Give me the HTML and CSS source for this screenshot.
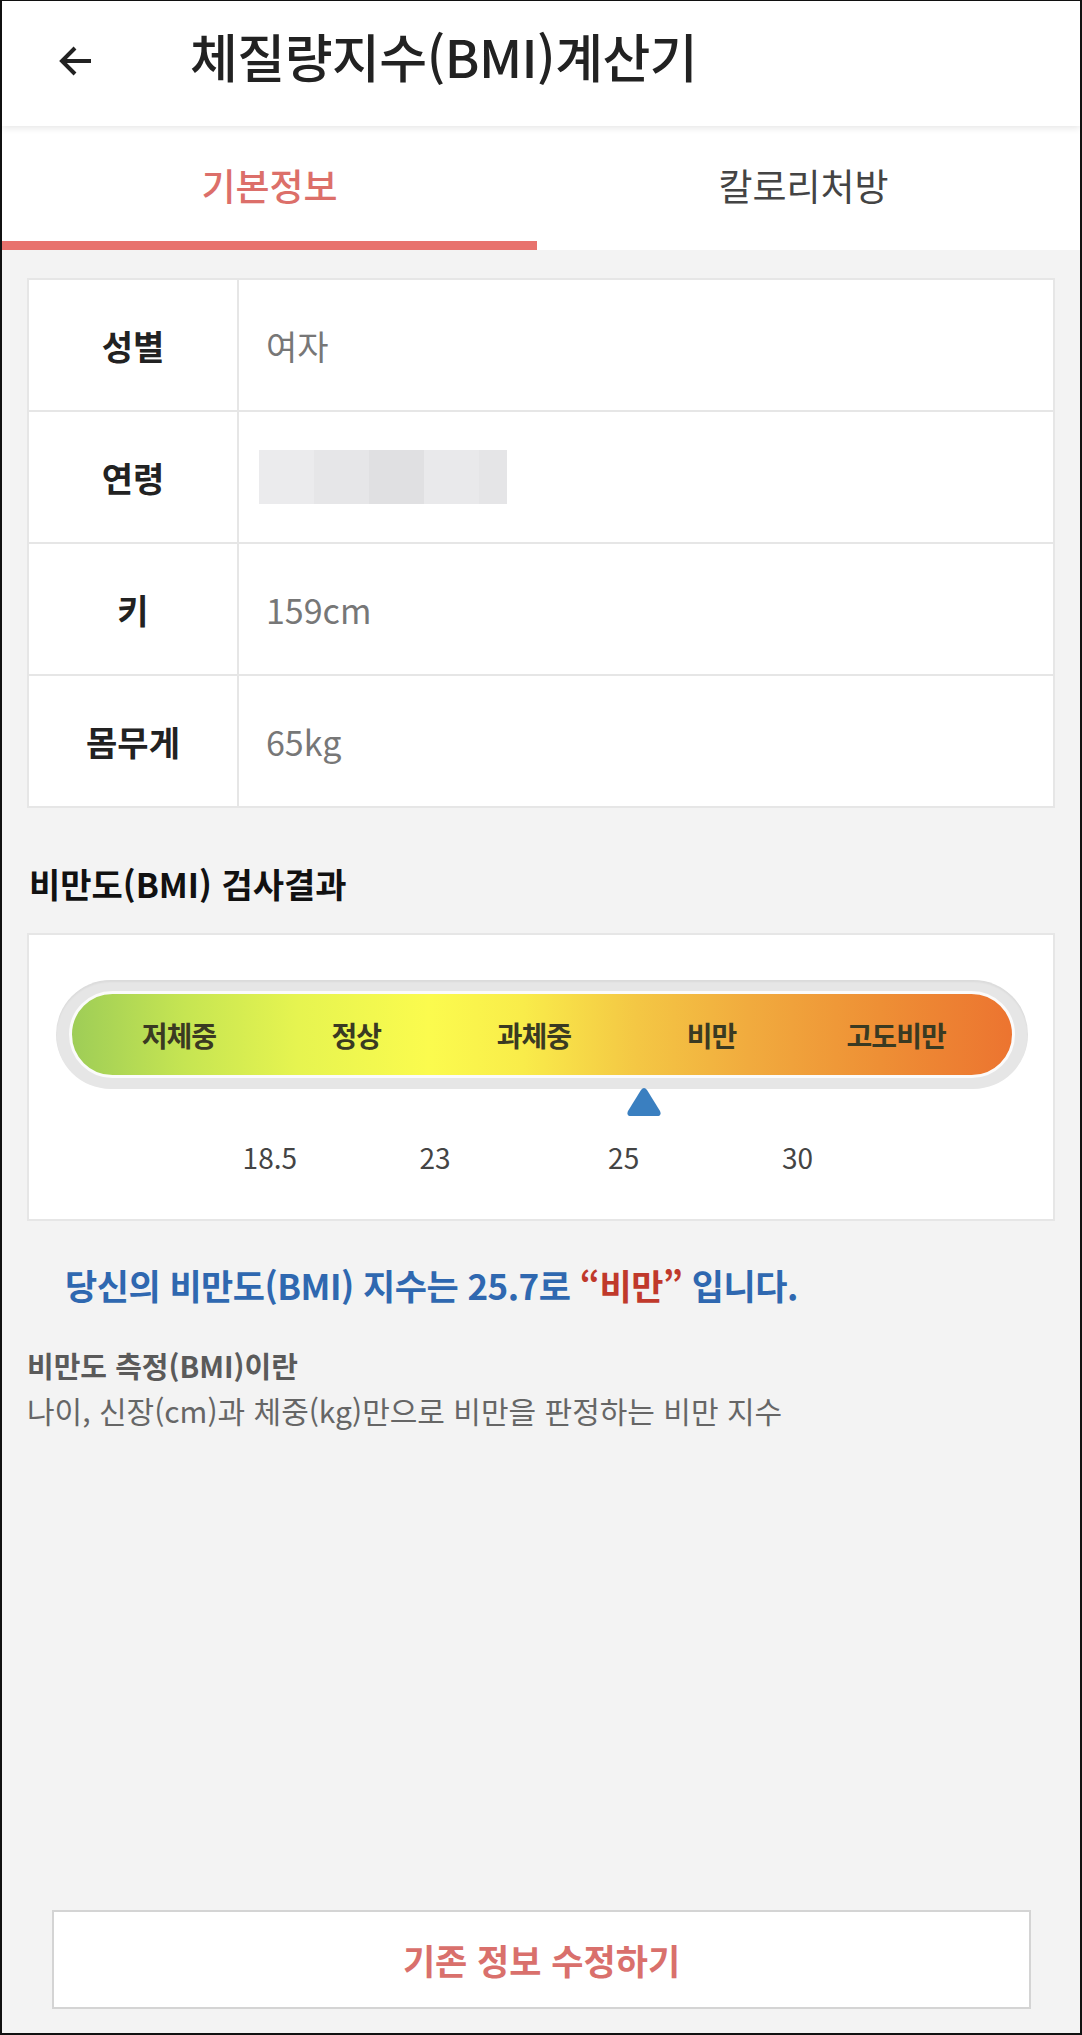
FILE: index.html
```html
<!DOCTYPE html>
<html lang="ko">
<head>
    <meta charset="UTF-8">
    <meta name="viewport" content="width=device-width, initial-scale=1.0">
    <title>체질량지수(BMI)계산기</title>
    <link rel="stylesheet" href="styles.css">
</head>
<body>
    <div class="app">
        <header class="app-header">
            <button class="back-btn" aria-label="뒤로가기">
                <svg width="34" height="30" viewBox="0 0 34 30">
                    <path d="M32 15H3M16 2L3 15l13 13" fill="none" stroke="#222" stroke-width="4"/>
                </svg>
            </button>
            <h1 class="app-title">체질량지수(BMI)계산기</h1>
        </header>

        <nav class="tabs">
            <a class="tab active">기본정보</a>
            <a class="tab">칼로리처방</a>
        </nav>

        <main class="content">
            <div class="info-table">
                <div class="info-label">성별</div>
                <div class="info-value">여자</div>
                <div class="info-label">연령</div>
                <div class="info-value">
                    <span class="mosaic"><i></i><i></i><i></i><i></i><i></i></span>
                </div>
                <div class="info-label">키</div>
                <div class="info-value">159cm</div>
                <div class="info-label">몸무게</div>
                <div class="info-value">65kg</div>
            </div>

            <h2 class="section-title">비만도(BMI) 검사결과</h2>

            <div class="chart-card">
                <div class="bar-frame">
                    <div class="bar">
                        <span>저체중</span>
                        <span>정상</span>
                        <span>과체중</span>
                        <span>비만</span>
                        <span>고도비만</span>
                    </div>
                </div>
                <div class="marker-row">
                    <svg class="marker" style="left: 60.5%;" width="36" height="30" viewBox="0 0 36 30">
                        <path d="M15 3Q18 -1 21 3L34 24Q36 29 31 29H5Q0 29 2 24Z" fill="#3a7fc0"/>
                    </svg>
                </div>
                <div class="ticks">
                    <span style="left: 22%;">18.5</span>
                    <span style="left: 39%;">23</span>
                    <span style="left: 58.4%;">25</span>
                    <span style="left: 76.3%;">30</span>
                </div>
            </div>

            <p class="result">당신의 비만도(BMI) 지수는 25.7로 <em>“비만”</em> 입니다.</p>

            <div class="desc">
                <strong>비만도 측정(BMI)이란</strong>
                <p>나이, 신장(cm)과 체중(kg)만으로 비만을 판정하는 비만 지수</p>
            </div>
        </main>

        <div class="bottom">
            <button class="edit-btn">기존 정보 수정하기</button>
        </div>
    </div>
</body>
</html>
```

FILE: styles.css
```css
* {
    box-sizing: border-box;
}
body {
    margin: 0;
    font-family: 'Noto Sans CJK KR', 'Noto Sans', sans-serif;
    color: #222;
}
.app {
    width: 1082px;
    height: 2035px;
    border: 2px solid #111;
    border-top-width: 1px;
    background-color: #f3f3f3;
    display: flex;
    flex-direction: column;
}
.app-header {
    height: 125px;
    background-color: #fff;
    display: flex;
    align-items: center;
    padding-left: 57px;
    position: relative;
    z-index: 1;
    box-shadow: 0 2px 7px rgba(0, 0, 0, 0.1);
}
.back-btn {
    background: none;
    border: none;
    padding: 0;
    width: 34px;
    height: 30px;
    margin-top: -6px;
    cursor: pointer;
}
.app-title {
    margin: -16px 0 0 97px;
    font-size: 52px;
    font-weight: 500;
    letter-spacing: -0.5px;
    color: #222;
}
.tabs {
    display: flex;
    height: 124px;
    background-color: #fff;
}
.tab {
    flex: 1;
    display: flex;
    align-items: center;
    justify-content: center;
    font-size: 37px;
    color: #444;
    border-bottom: 9px solid transparent;
    padding: 2px 10px 0 0;
}
.tab.active {
    flex: 0 0 535px;
    padding-right: 0;
    color: #dc6f6a;
    font-weight: 500;
    border-bottom-color: #e8726d;
}
.content {
    padding: 28px 25px 0;
}
.info-table {
    display: grid;
    grid-template-columns: 210px 1fr;
    border-top: 2px solid #e6e6e6;
    border-left: 2px solid #e6e6e6;
    background-color: #fff;
}
.info-label,
.info-value {
    height: 132px;
    border-right: 2px solid #e6e6e6;
    border-bottom: 2px solid #e6e6e6;
    display: flex;
    align-items: center;
    font-size: 34px;
}
.info-label {
    justify-content: center;
    font-weight: 700;
    color: #222;
}
.info-value {
    padding-left: 27px;
    font-size: 34px;
    color: #777;
}
.mosaic {
    display: flex;
    height: 54px;
    margin-left: -7px;
}
.mosaic i {
    width: 55px;
    background-color: #ebebed;
}
.mosaic i:nth-child(2) {
    background-color: #e6e6e8;
}
.mosaic i:nth-child(3) {
    background-color: #e0e0e2;
}
.mosaic i:nth-child(4) {
    background-color: #e9e9eb;
}
.mosaic i:nth-child(5) {
    width: 28px;
    background-color: #e5e5e7;
}
.section-title {
    margin: 52px 0 0 2px;
    font-size: 34px;
    font-weight: 700;
    line-height: 48px;
    color: #111;
}
.chart-card {
    margin-top: 25px;
    height: 288px;
    background-color: #fff;
    border: 2px solid #e6e6e6;
    padding: 45px 25px 0 27px;
}
.bar-frame {
    padding: 11px 13px;
    background-color: #e6e6e6;
    border-radius: 60px;
    box-shadow: inset 0 2px 2px rgba(0, 0, 0, 0.05);
}
.bar {
    height: 87px;
    border: 3px solid #fbfbfb;
    border-radius: 50px;
    background: linear-gradient(to right, #9ecd57 0%, #c6e552 12%, #e6f450 24%, #fbfb4e 38%, #f9ec4a 48%, #f4c744 60%, #f1ab3e 72%, #ee8f35 86%, #ec7430 100%);
    display: flex;
    align-items: center;
    padding: 0 20px 0 18px;
    font-size: 28px;
    font-weight: 700;
    color: #3a3a22;
    letter-spacing: -1px;
}
.bar span {
    flex: 1;
    text-align: center;
}
.bar span:last-child {
    flex: 1.08;
}
.marker-row {
    position: relative;
    height: 30px;
    margin-top: -2px;
}
.marker {
    position: absolute;
    top: 0;
    transform: translateX(-50%);
}
.ticks {
    position: relative;
    height: 36px;
    margin-top: 22px;
}
.ticks span {
    position: absolute;
    top: 0;
    transform: translateX(-50%);
    font-size: 28px;
    line-height: 36px;
    color: #444;
}
.result {
    margin: 42px 0 0 38px;
    font-size: 35px;
    line-height: 44px;
    font-weight: 700;
    color: #2f68b0;
    letter-spacing: -0.5px;
}
.result em {
    font-style: normal;
    color: #c0392b;
}
.desc {
    margin-top: 36px;
    font-size: 30px;
    line-height: 45px;
    color: #666;
}
.desc strong {
    display: block;
    font-size: 29px;
    font-weight: 700;
    color: #5a5a5a;
}
.desc p {
    margin: 0;
}
.bottom {
    margin-top: auto;
    padding: 0 49px 24px 50px;
}
.edit-btn {
    width: 100%;
    height: 99px;
    background-color: #fff;
    border: 2px solid #d4d4d4;
    font-family: 'Noto Sans CJK KR', 'Noto Sans', sans-serif;
    font-size: 35px;
    font-weight: 700;
    color: #d9706c;
    cursor: pointer;
}
```
